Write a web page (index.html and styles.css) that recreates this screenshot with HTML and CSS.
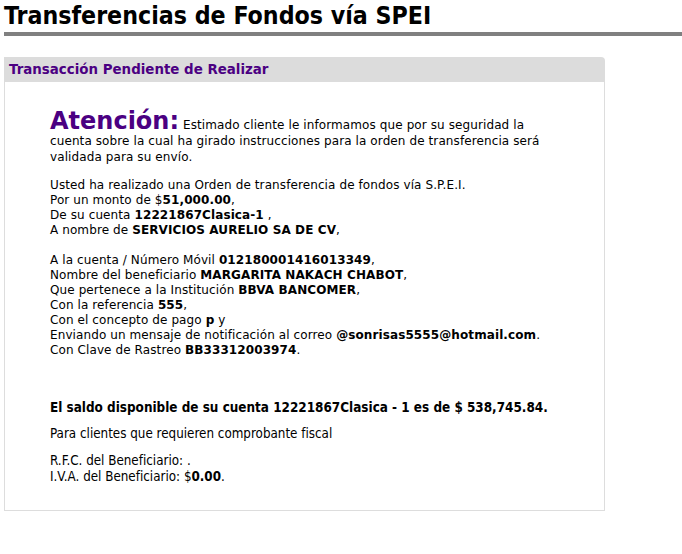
FILE: index.html
```html
<!DOCTYPE html>
<html lang="es">
<head>
<meta charset="utf-8">
<title>Transferencias de Fondos vía SPEI</title>
<link rel="stylesheet" href="styles.css">
</head>
<body>
<div class="page">
  <h1 class="title">Transferencias de Fondos vía SPEI</h1>
  <div class="rule"></div>
  <div class="panel">
    <div class="panel-head">Transacción Pendiente de Realizar</div>
    <div class="panel-body">
      <p class="intro"><span class="attn">Atención:</span> Estimado cliente le informamos que por su seguridad la cuenta sobre la cual ha girado instrucciones para la orden de transferencia será validada para su envío.</p>
      <p class="block first">Usted ha realizado una Orden de transferencia de fondos vía S.P.E.I.<br>
      Por un monto de $<b>51,000.00</b>,<br>
      De su cuenta <b>12221867Clasica-1</b> ,<br>
      A nombre de <b>SERVICIOS AURELIO SA DE CV</b>,</p>
      <p class="block">A la cuenta / Número Móvil <b>012180001416013349</b>,<br>
      Nombre del beneficiario <b>MARGARITA NAKACH CHABOT</b>,<br>
      Que pertenece a la Institución <b>BBVA BANCOMER</b>,<br>
      Con la referencia <b>555</b>,<br>
      Con el concepto de pago <b>p</b> y<br>
      Enviando un mensaje de notificación al correo <b>@sonrisas5555@hotmail.com</b>.<br>
      Con Clave de Rastreo <b>BB33312003974</b>.</p>
      <p class="saldo">El saldo disponible de su cuenta 12221867Clasica - 1 es de $ 538,745.84.</p>
      <p class="fiscal">Para clientes que requieren comprobante fiscal</p>
      <p class="fiscal second">R.F.C. del Beneficiario: .<br>
      I.V.A. del Beneficiario: $<b>0.00</b>.</p>
    </div>
  </div>
</div>
</body>
</html>
```

FILE: styles.css
```css
html, body {
  margin: 0;
  padding: 0;
  background: #fff;
  color: #000;
}
.page {
  padding-left: 4px;
  overflow: hidden;
}
.title {
  margin: 0;
  font-family: "DejaVu Sans Condensed", "DejaVu Sans", sans-serif;
  font-weight: bold;
  font-size: 24.7px;
  line-height: 32px;
  height: 32px;
}
.rule {
  height: 4px;
  background: #808080;
}
.panel {
  width: 601px;
  margin-top: 21px;
}
.panel-head {
  background: #dcdcdc;
  height: 25px;
  border-top-right-radius: 4px;
  color: #4b0082;
  font-family: "DejaVu Sans", sans-serif;
  font-weight: bold;
  font-size: 13.4px;
  line-height: 26px;
  padding-left: 5px;
}
.panel-body {
  border: 1px solid #dddddd;
  border-top: none;
  height: 429px;
  box-sizing: border-box;
  padding: 31px 0 0 45px;
  font-family: "DejaVu Sans", sans-serif;
  font-size: 12px;
  letter-spacing: 0.1px;
  line-height: 15px;
}
.panel-body p {
  margin: 0;
}
.intro {
  width: 495px;
  line-height: 16px;
}
.attn {
  color: #4b0082;
  font-weight: bold;
  font-size: 24px;
  letter-spacing: 0;
  line-height: 16px;
}
.block {
  margin-top: 15px !important;
}
.block.first {
  margin-top: 13px !important;
}
.saldo {
  margin-top: 42px !important;
  font-family: "DejaVu Sans Condensed", sans-serif;
  font-weight: bold;
  font-size: 13.4px;
  letter-spacing: 0;
}
.fiscal {
  margin-top: 11px !important;
  font-family: "DejaVu Sans Condensed", sans-serif;
  font-size: 13.3px;
  letter-spacing: 0;
  line-height: 16px;
}
.fiscal.second {
  margin-top: 11px !important;
}
```
